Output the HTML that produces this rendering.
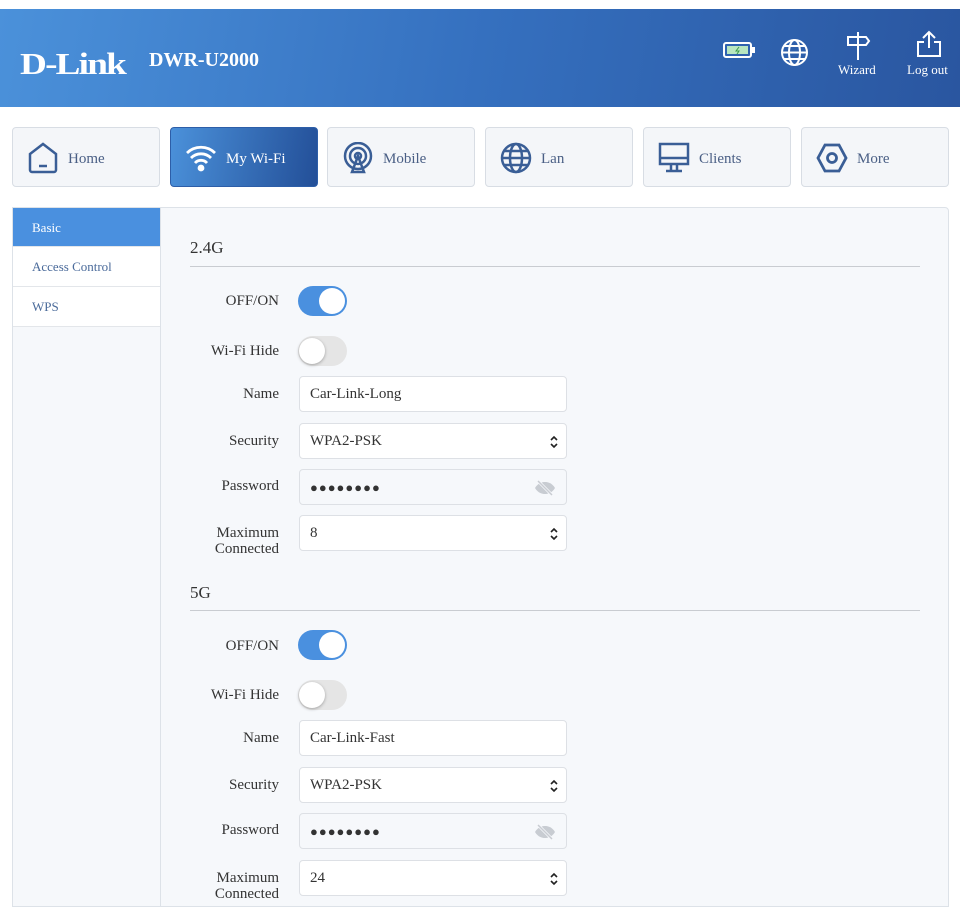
<!DOCTYPE html><html><head><meta charset="utf-8"><style>
*{box-sizing:border-box;margin:0;padding:0}
body{width:960px;height:906px;overflow:hidden;background:#fff;font-family:"Liberation Serif",serif;color:#333;position:relative}
.hdr{position:absolute;left:0;top:9px;width:960px;height:98px;background:linear-gradient(100deg,#4b91da 0%,#3570bf 50%,#2a56a0 100%)}
.logo{position:absolute;left:20px;top:38px;color:#fff;font-weight:bold;font-size:31px;letter-spacing:-1.5px;transform:scaleX(1.2);transform-origin:left top;line-height:34px}
.model{position:absolute;left:149px;top:40px;color:#fff;font-size:20px;font-weight:bold}
.hi{position:absolute;color:#fff;font-size:13px;text-align:center}
.tab{position:absolute;top:127px;width:148px;height:60px;border:1px solid #d8dde4;border-radius:4px;background:#f4f6f9;color:#4a5f85;font-size:15px}
.tab svg{position:absolute;left:14px;top:14px}
.tab span{position:absolute;left:55px;top:23px}
.tab.act{background:linear-gradient(100deg,#4b91da,#234f98);color:#fff;border-color:#2d5ea8}
.side{position:absolute;left:12px;top:207px;width:149px;height:700px;border:1px solid #dde2e8;border-right:none;background:#f6f8fb}
.si{height:40px;border-bottom:1px solid #e3e6ea;background:#fff;font-size:13px;color:#4a6a9a;padding:12px 0 0 19px}
.si.act{background:#4a90df;color:#fff;height:39px}
.main{position:absolute;left:160px;top:207px;width:789px;height:700px;border:1px solid #dde2e8;background:#f6f8fb;border-radius:0 4px 0 0}
.h{position:absolute;left:190px;font-size:17px;color:#333}
.line{position:absolute;left:190px;width:730px;height:1px;background:#c9ccd1}
.lb{position:absolute;right:681px;font-size:15px;text-align:right;color:#333;line-height:16px}
.tg{position:absolute;left:298px;width:49px;height:30px;border-radius:15px;background:#4a90df}
.tg::after{content:"";position:absolute;right:2px;top:2px;width:26px;height:26px;border-radius:50%;background:#fff}
.tg.off{background:#e5e5e5}
.tg.off::after{left:1px;right:auto;box-shadow:0 1px 3px rgba(0,0,0,.3)}
.in{position:absolute;left:299px;width:268px;height:36px;border:1px solid #dde0e5;border-radius:4px;background:#fff;font-size:15px;padding:9px 0 0 10px;color:#333}
.in.pw{background:#f6f8fb;font-size:13px;letter-spacing:1px;padding-top:10px}
.ar{position:absolute;right:7px;top:11px;width:10px;height:14px}
.eye{position:absolute;right:10px;top:10px}
</style></head><body>
<div class="hdr">
<div class="logo">D-Link</div><div class="model">DWR-U2000</div>
<svg style="position:absolute;left:723px;top:33px" width="32" height="16"><rect x="1" y="1" width="27" height="14" rx="2" fill="none" stroke="#fff" stroke-width="2"/><rect x="4" y="4" width="21" height="8" fill="#b8e6c0"/><rect x="29" y="5" width="3" height="6" fill="#fff"/><path d="M16 5l-3 4h3l-2 3" stroke="#3a9a4a" fill="none"/></svg>
<svg style="position:absolute;left:780px;top:29px" width="29" height="29" fill="none" stroke="#fff" stroke-width="2"><circle cx="14.5" cy="14.5" r="12.5"/><ellipse cx="14.5" cy="14.5" rx="5.5" ry="12.5"/><path d="M2 14.5h25M4 8h21M4 21h21"/></svg>
<svg style="position:absolute;left:845px;top:22px" width="26" height="30" fill="none" stroke="#fff" stroke-width="2"><path d="M13 1v28M3 6h18l3 4-3 4H3z"/></svg>
<div class="hi" style="left:838px;top:53px">Wizard</div>
<svg style="position:absolute;left:916px;top:21px" width="26" height="28" fill="none" stroke="#fff" stroke-width="2"><path d="M13 2v16M7 8l6-6 6 6M8 12H2v14h22V12h-6"/></svg>
<div class="hi" style="left:907px;top:53px">Log out</div>
</div>
<div class="tab" style="left:12px"><svg width="32" height="32" fill="none" stroke="#3a5e96" stroke-width="2.5"><path d="M3 12L16 2l13 10v16a2 2 0 0 1-2 2H5a2 2 0 0 1-2-2z"/><path d="M12 24h8"/></svg><span>Home</span></div>
<div class="tab act" style="left:170px"><svg width="32" height="32" fill="none" stroke="#fff" stroke-width="2.8"><path d="M2 11a20 20 0 0 1 28 0M6 16a14 14 0 0 1 20 0M10 21a8 8 0 0 1 12 0"/><circle cx="16" cy="26" r="2" fill="#fff"/></svg><span>My Wi-Fi</span></div>
<div class="tab" style="left:327px"><svg width="32" height="32" fill="none" stroke="#3a5e96" stroke-width="2.5"><circle cx="16" cy="14" r="13"/><circle cx="16" cy="14" r="8"/><circle cx="16" cy="14" r="3"/><path d="M16 14l-6 16h12z"/></svg><span>Mobile</span></div>
<div class="tab" style="left:485px"><svg width="32" height="32" fill="none" stroke="#3a5e96" stroke-width="2.5"><circle cx="16" cy="16" r="14"/><ellipse cx="16" cy="16" rx="6" ry="14"/><path d="M2 16h28M4 9h24M4 23h24"/></svg><span>Lan</span></div>
<div class="tab" style="left:643px"><svg width="32" height="32" fill="none" stroke="#3a5e96" stroke-width="2.5"><rect x="2" y="2" width="28" height="20"/><path d="M2 16h28M13 22v6M19 22v6M8 29h16"/></svg><span>Clients</span></div>
<div class="tab" style="left:801px"><svg width="32" height="32" fill="none" stroke="#3a5e96" stroke-width="2.8"><path d="M9 3h14l7 13-7 13H9L2 16z"/><circle cx="16" cy="16" r="4.5"/></svg><span>More</span></div>
<div class="side"><div class="si act">Basic</div><div class="si">Access Control</div><div class="si">WPS</div></div>
<div class="main"></div>
<div class="h" style="top:238px">2.4G</div><div class="line" style="top:266px"></div>
<div class="lb" style="top:293px">OFF/ON</div><div class="tg" style="top:286px"></div>
<div class="lb" style="top:343px">Wi-Fi Hide</div><div class="tg off" style="top:336px"></div>
<div class="lb" style="top:386px">Name</div><div class="in" style="top:376px">Car-Link-Long</div>
<div class="lb" style="top:433px">Security</div><div class="in" style="top:423px">WPA2-PSK<svg class="ar" viewBox="0 0 10 14" fill="none" stroke="#222" stroke-width="1.6"><path d="M2 5l3-3 3 3M2 9l3 3 3-3"/></svg></div>
<div class="lb" style="top:478px">Password</div><div class="in pw" style="top:469px">●●●●●●●●<svg class="eye" width="22" height="16" viewBox="0 0 22 16" fill="#c8ccd2"><path d="M1 8c3-5 7-6 10-6s7 1 10 6c-3 5-7 6-10 6S4 13 1 8z"/><path d="M4 1l14 14" stroke="#f6f8fb" stroke-width="3"/><path d="M4 1l14 14" stroke="#c8ccd2" stroke-width="1.5"/></svg></div>
<div class="lb" style="top:525px">Maximum<br>Connected</div><div class="in" style="top:515px">8<svg class="ar" viewBox="0 0 10 14" fill="none" stroke="#222" stroke-width="1.6"><path d="M2 5l3-3 3 3M2 9l3 3 3-3"/></svg></div>
<div class="h" style="top:583px">5G</div><div class="line" style="top:610px"></div>
<div class="lb" style="top:638px">OFF/ON</div><div class="tg" style="top:630px"></div>
<div class="lb" style="top:687px">Wi-Fi Hide</div><div class="tg off" style="top:680px"></div>
<div class="lb" style="top:730px">Name</div><div class="in" style="top:720px">Car-Link-Fast</div>
<div class="lb" style="top:777px">Security</div><div class="in" style="top:767px">WPA2-PSK<svg class="ar" viewBox="0 0 10 14" fill="none" stroke="#222" stroke-width="1.6"><path d="M2 5l3-3 3 3M2 9l3 3 3-3"/></svg></div>
<div class="lb" style="top:822px">Password</div><div class="in pw" style="top:813px">●●●●●●●●<svg class="eye" width="22" height="16" viewBox="0 0 22 16" fill="#c8ccd2"><path d="M1 8c3-5 7-6 10-6s7 1 10 6c-3 5-7 6-10 6S4 13 1 8z"/><path d="M4 1l14 14" stroke="#f6f8fb" stroke-width="3"/><path d="M4 1l14 14" stroke="#c8ccd2" stroke-width="1.5"/></svg></div>
<div class="lb" style="top:870px">Maximum<br>Connected</div><div class="in" style="top:860px">24<svg class="ar" viewBox="0 0 10 14" fill="none" stroke="#222" stroke-width="1.6"><path d="M2 5l3-3 3 3M2 9l3 3 3-3"/></svg></div>
</body></html>
